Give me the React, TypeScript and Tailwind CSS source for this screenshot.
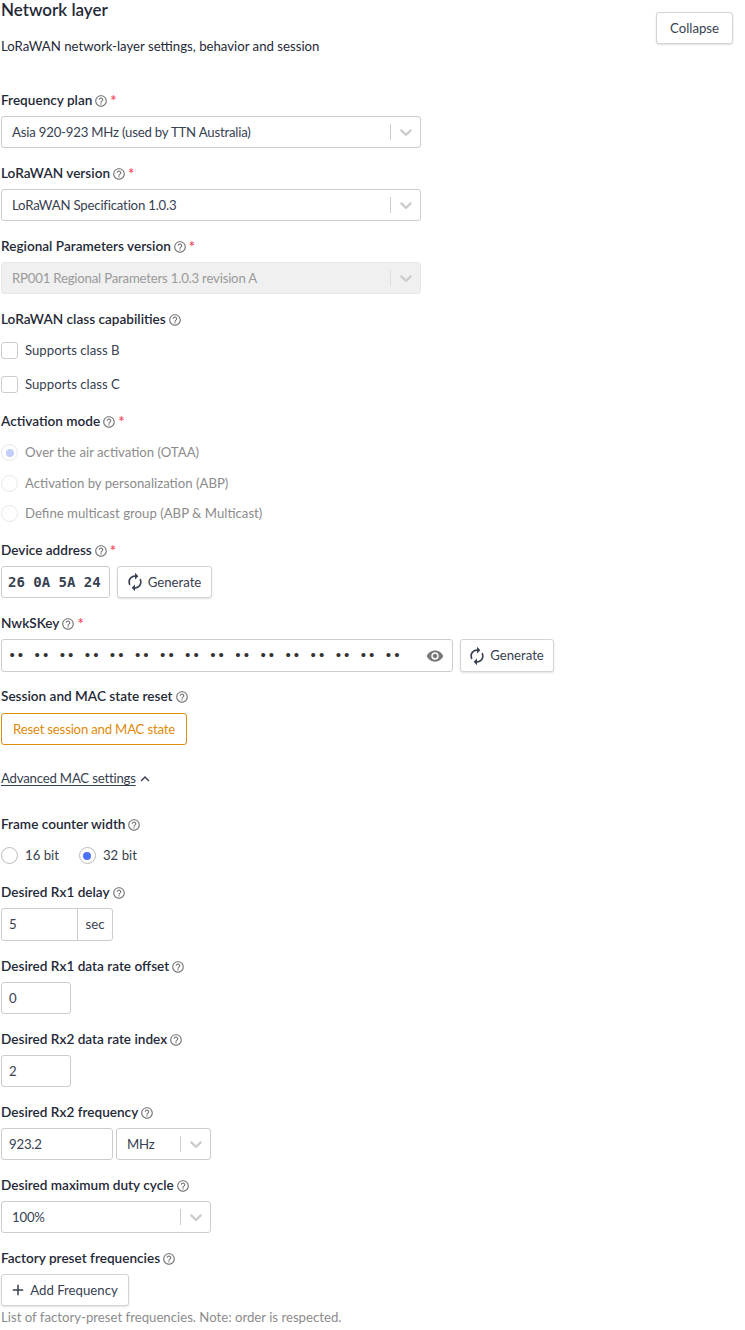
import React from 'react';
import { MdAdd, MdAutorenew, MdHelpOutline, MdKeyboardArrowUp, MdVisibility } from 'react-icons/md';

const Chevron: React.FC = () => (
  <svg viewBox="0 0 20 20" className="h-5 w-5 fill-[#cccccc]">
    <path d="M4.516 7.548c0.436-0.446 1.043-0.481 1.576 0l3.908 3.747 3.908-3.747c0.533-0.481 1.141-0.446 1.574 0 0.436 0.445 0.408 1.197 0 1.615-0.406 0.418-4.695 4.502-4.695 4.502-0.217 0.223-0.502 0.335-0.787 0.335s-0.57-0.112-0.789-0.335c0 0-4.287-4.084-4.695-4.502s-0.436-1.17 0-1.615z" />
  </svg>
);

const Label: React.FC<{ text: string; required?: boolean }> = ({ text, required }) => (
  <div className="flex h-[21px] items-center text-[13.6px] font-semibold tracking-normal text-[#1f2937]">
    <span>{text}</span>
    <MdHelpOutline className="ml-[2px] text-[14px] text-[#777777]" />
    {required && <span className="ml-[2px] text-[15px] text-[#f5475b]">*</span>}
  </div>
);

const Field: React.FC<{ text: string; required?: boolean; children: React.ReactNode; className?: string }> = ({
  text,
  required,
  children,
  className,
}) => (
  <div className={className ?? 'mb-[15px]'}>
    <Label text={text} required={required} />
    <div className="mt-[5px]">{children}</div>
  </div>
);

const Select: React.FC<{ value: string; className: string; disabled?: boolean }> = ({ value, className, disabled }) => (
  <div
    className={`flex h-[32px] items-center rounded-[3px] border border-[#cccccc] pl-[10px] ${className} ${
      disabled ? 'border-[#e8e8e8] bg-[#f0f0f0] text-[#9a9a9a]' : 'bg-white text-[#374151]'
    }`}
  >
    <span className="flex-1 truncate">{value}</span>
    <span className={`h-[16px] w-px ${disabled ? 'bg-[#dddddd]' : 'bg-[#cccccc]'}`} />
    <span className="flex w-[29px] justify-center">
      <Chevron />
    </span>
  </div>
);

const TextInput: React.FC<{ value: string; className: string }> = ({ value, className }) => (
  <div className={`flex h-[32px] items-center rounded-[3px] border border-[#cccccc] bg-white pl-[7px] text-[#374151] ${className}`}>
    {value}
  </div>
);

const Button: React.FC<{ className?: string; children: React.ReactNode }> = ({ className, children }) => (
  <button className={`flex items-center justify-center rounded-[3px] border border-[#d4d4d4] bg-white tracking-normal text-[#374151] shadow-[0_1px_2px_rgba(0,0,0,0.12)] ${className ?? 'h-[32px]'}`}>
    {children}
  </button>
);

const GenerateButton: React.FC<{ className: string }> = ({ className }) => (
  <Button className={`pr-[3px] ${className}`}>
    <MdAutorenew className="mr-[3px] text-[20px] text-[#374151]" />
    Generate
  </Button>
);

const CheckRow: React.FC<{ text: string }> = ({ text }) => (
  <div className="flex h-[34px] items-center">
    <span className="h-[17px] w-[17px] rounded-[3px] border border-[#cccccc] bg-white" />
    <span className="ml-[7px] tracking-normal text-[#374151]">{text}</span>
  </div>
);

const Radio: React.FC<{ text: string; checked?: boolean; disabled?: boolean }> = ({ text, checked, disabled }) => (
  <div className="flex items-center">
    <span className={`flex h-[17px] w-[17px] items-center justify-center rounded-full border ${disabled ? 'border-[#e8e8e8]' : 'border-[#bbbbbb]'}`}>
      {checked && <span className={`h-[8px] w-[8px] rounded-full ${disabled ? 'bg-[#c3cffb]' : 'bg-[#4a72f5]'}`} />}
    </span>
    <span className={`ml-[7px] tracking-normal ${disabled ? 'text-[#8c8c8c]' : 'text-[#374151]'}`}>{text}</span>
  </div>
);

export default function App() {
  return (
    <div className="h-[1330px] w-[745px] overflow-hidden bg-white pl-px font-['Lato',sans-serif] text-[13.2px] leading-[21px] tracking-[-0.2px]">
      <div className="flex justify-between pr-[12px]">
        <div>
          <h2 className="text-[17px] leading-[20px] font-semibold tracking-normal text-[#1f2937]">Network layer</h2>
          <p className="mt-[16px] tracking-normal text-[#1f2937]">LoRaWAN network-layer settings, behavior and session</p>
        </div>
        <Button className="mt-[12px] h-[32px] w-[77px]">Collapse</Button>
      </div>

      <div className="mt-[33px] w-[553px]">
        <Field text="Frequency plan" required>
          <Select className="w-[420px]" value="Asia 920-923 MHz (used by TTN Australia)" />
        </Field>
        <Field text="LoRaWAN version" required>
          <Select className="w-[420px]" value="LoRaWAN Specification 1.0.3" />
        </Field>
        <Field text="Regional Parameters version" required>
          <Select className="w-[420px]" disabled value="RP001 Regional Parameters 1.0.3 revision A" />
        </Field>

        <div className="mb-[10px]">
          <Label text="LoRaWAN class capabilities" />
          <div className="mt-[3px]">
            <CheckRow text="Supports class B" />
            <CheckRow text="Supports class C" />
          </div>
        </div>

        <div className="mb-[16px]">
          <Label text="Activation mode" required />
          <div className="mt-[10px] flex flex-col gap-[9.5px]">
            <Radio disabled checked text="Over the air activation (OTAA)" />
            <Radio disabled text="Activation by personalization (ABP)" />
            <Radio disabled text="Define multicast group (ABP & Multicast)" />
          </div>
        </div>

        <Field text="Device address" required>
          <div className="flex gap-[7px]">
            <div className="flex h-[32px] w-[109px] items-center rounded-[3px] border border-[#cccccc] bg-white pl-[6px] font-['DejaVu_Sans_Mono',monospace] text-[14px] font-bold tracking-normal whitespace-pre text-[#374151]">
              26 0A 5A 24
            </div>
            <GenerateButton className="h-[32px] w-[95px]" />
          </div>
        </Field>

        <Field text="NwkSKey" required className="mb-[14px]">
          <div className="flex gap-[7px]">
            <div className="flex h-[33px] w-[452px] items-center rounded-[3px] border border-[#cccccc] bg-white pl-[6px] font-['DejaVu_Sans_Mono',monospace] text-[13.9px] tracking-normal whitespace-pre text-[#333333]">
              <span className="flex-1">•• •• •• •• •• •• •• •• •• •• •• •• •• •• •• ••</span>
              <MdVisibility className="mr-[8px] text-[18px] text-[#777777]" />
            </div>
            <GenerateButton className="h-[33px] w-[94px]" />
          </div>
        </Field>

        <Field text="Session and MAC state reset" className="mb-[23px]">
          <button className="mt-px h-[32px] w-[186px] rounded-[3px] border border-[#db8f0e] bg-white text-[#e08a0b]">
            Reset session and MAC state
          </button>
        </Field>

        <div className="mb-[25px] flex h-[21px] items-center text-[#374151]">
          <span className="underline underline-offset-2">Advanced MAC settings</span>
          <MdKeyboardArrowUp className="text-[18px]" />
        </div>

        <div className="mb-[16px]">
          <Label text="Frame counter width" />
          <div className="mt-[10px] flex gap-[20px]">
            <Radio text="16 bit" />
            <Radio checked text="32 bit" />
          </div>
        </div>

        <Field text="Desired Rx1 delay">
          <div className="flex h-[33px] w-[112px] items-center rounded-[3px] border border-[#cccccc] bg-white text-[#374151]">
            <span className="w-[76px] border-r border-[#cccccc] pl-[7px] leading-[31px]">5</span>
            <span className="flex-1 text-center tracking-normal">sec</span>
          </div>
        </Field>
        <Field text="Desired Rx1 data rate offset">
          <TextInput className="w-[70px]" value="0" />
        </Field>
        <Field text="Desired Rx2 data rate index">
          <TextInput className="w-[70px]" value="2" />
        </Field>
        <Field text="Desired Rx2 frequency">
          <div className="flex gap-[3px]">
            <TextInput className="w-[112px]" value="923.2" />
            <Select className="w-[95px]" value="MHz" />
          </div>
        </Field>
        <Field text="Desired maximum duty cycle">
          <Select className="w-[210px]" value="100%" />
        </Field>
        <Field text="Factory preset frequencies" className="mb-0">
          <Button className="h-[32px] w-[128px] pr-[3px]">
            <MdAdd className="mr-[3px] text-[18px]" />
            Add Frequency
          </Button>
        </Field>
        <p className="mt-[1px] tracking-normal text-[#8c8c8c]">List of factory-preset frequencies. Note: order is respected.</p>
      </div>
    </div>
  );
}
